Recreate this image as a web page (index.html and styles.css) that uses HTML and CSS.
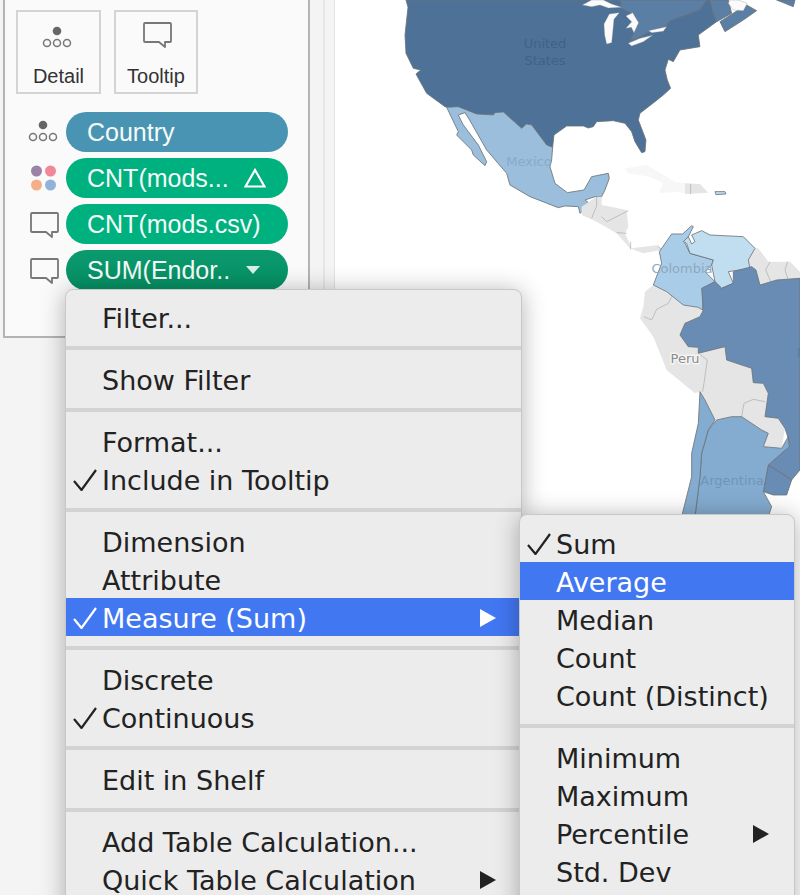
FILE: index.html
```html
<!DOCTYPE html>
<html lang="en">
<head>
    <meta charset="UTF-8">
    <title>Marks card menu</title>
    <link rel="stylesheet" href="styles.css">
</head>
<body>
    <div class="page">
        <aside class="sidebar">
            <div class="marks">
                <div class="cards">
                    <div class="card">
                        <svg class="card-icon card-dots" width="34" height="34" viewBox="0 0 34 34"><use href="#detail-icon"/></svg>
                        <span>Detail</span>
                    </div>
                    <div class="card">
                        <svg class="card-icon" width="34" height="34" viewBox="0 5 34 34"><use href="#tip-icon"/></svg>
                        <span>Tooltip</span>
                    </div>
                </div>
                <div class="pills">
                    <div class="pill-row">
                        <svg width="34" height="34" viewBox="0 -1 34 34"><use href="#detail-icon"/></svg>
                        <div class="pill pill-blue">Country</div>
                    </div>
                    <div class="pill-row">
                        <svg width="34" height="34" viewBox="0 0 34 34">
                            <circle cx="10.500" cy="10" r="5.500" fill="#9a82a8"/>
                            <circle cx="24.500" cy="10" r="5.500" fill="#f2879a"/>
                            <circle cx="10.500" cy="24" r="5.500" fill="#f3b088"/>
                            <circle cx="24.500" cy="24" r="5.500" fill="#92b3d8"/>
                        </svg>
                        <div class="pill pill-green">CNT(mods...
                            <svg class="pill-mark" width="22" height="20" viewBox="0 0 22 20"><path d="M11 2 L20.500 18.500 H1.500 Z" fill="none" stroke="#fff" stroke-width="2.200"/></svg>
                        </div>
                    </div>
                    <div class="pill-row">
                        <svg width="34" height="34" viewBox="0 0 34 34"><use href="#tip-icon"/></svg>
                        <div class="pill pill-green">CNT(mods.csv)</div>
                    </div>
                    <div class="pill-row">
                        <svg width="34" height="34" viewBox="0 0 34 34"><use href="#tip-icon"/></svg>
                        <div class="pill pill-dark">SUM(Endor..
                            <svg class="pill-caret" width="14" height="8" viewBox="0 0 14 8"><path d="M0 0 H14 L7 8 Z" fill="#d8efe6"/></svg>
                        </div>
                    </div>
                </div>
            </div>
            <div class="gutter"></div>
        </aside>

        <main class="map">
            <svg width="465" height="895" viewBox="335 0 465 895">
                <defs>
                    <g id="detail-icon" fill="none" stroke="#777" stroke-width="1.500">
                        <circle cx="17" cy="9" r="4.300" fill="#666" stroke="none"/>
                        <circle cx="7" cy="21" r="3.500"/>
                        <circle cx="17" cy="21" r="3.500"/>
                        <circle cx="27" cy="21" r="3.500"/>
                    </g>
                    <path id="tip-icon" d="M6 6 H31 Q32 6 32 7 V24 Q32 25 31 25 H26 V30 L20 25 H6 Q5 25 5 24 V7 Q5 6 6 6 Z" fill="none" stroke="#777" stroke-width="1.800" stroke-linejoin="round"/>
                </defs>

                <!-- north america, points read off a 3x crop -->
                <g transform="translate(330 0) scale(0.3333)">
                    <path class="land usa" d="M228 0 L234 22 L225 105 L228 160 L250 205 L272 210 L258 222 L265 235 L290 280 L345 320 L440 342 L490 345 L495 338 L520 336 L575 385 L590 372 L605 375 L650 435 L668 442 L672 405 L710 378 L760 378 L775 384 L790 380 L800 365 L850 362 L885 370 L905 395 L915 425 L935 458 L945 455 L948 420 L925 360 L930 340 L975 305 L1000 285 L1022 265 L1012 240 L1005 210 L1015 178 L1030 185 L1050 150 L1110 140 L1105 105 L1160 65 L1150 35 L1140 0 Z"/>
                    <path class="land canada" d="M870 0 L1130 0 L1110 30 L1020 62 L1005 82 L960 95 L900 125 L925 70 L905 40 L875 25 Z"/>
                    <path class="land canada" d="M1140 0 L1195 0 L1205 40 L1160 65 L1150 40 Z"/>
                    <path class="land canada" d="M1170 65 L1225 30 L1250 15 L1280 32 L1240 60 L1185 95 Z"/>
                    <path class="land canada" d="M1340 0 L1395 0 L1390 20 L1365 10 Z"/>
                    <path class="lake" d="M757 15 L785 0 L820 0 L845 12 L875 22 L835 24 L810 15 L785 20 Z"/>
                    <path class="lake" d="M822 72 L838 42 L868 38 L852 58 L848 100 L845 128 L830 132 L824 105 Z"/>
                    <path class="lake" d="M888 48 L908 38 L926 68 L912 98 L904 82 L888 85 L905 65 Z"/>
                    <path class="lake" d="M895 130 L930 115 L968 106 L940 125 L905 138 Z"/>
                    <path class="lake" d="M956 92 L1010 80 L1000 94 L965 98 Z"/>
                    <path class="lake" d="M1195 10 L1210 30 L1240 32 L1252 10 L1225 0 L1200 0 Z"/>
                    <path class="land mexico" d="M350 322 L385 320 L440 342 L490 345 L495 338 L520 336 L575 385 L590 372 L605 375 L650 435 L668 442 L665 480 L660 500 L675 550 L712 578 L762 570 L785 530 L835 520 L838 535 L825 570 L815 590 L795 590 L765 600 L780 612 L750 640 L745 620 L705 618 L685 623 L600 590 L540 555 L530 520 L470 450 L420 362 L405 338 L385 345 L400 375 L445 435 L470 485 L465 497 L430 465 L425 450 L380 405 L385 395 Z"/>
                    <path class="ghost" d="M885 505 L950 495 L1035 545 L1065 550 L1065 580 L1040 575 L985 580 L1000 550 L960 530 L895 520 Z"/>
                    <path class="other" d="M1065 550 L1110 552 L1135 578 L1065 582 Z"/>
                    <path class="other-line" d="M1082 552 V582"/>
                    <path class="land venezuela" d="M1155 575 L1185 575 L1188 582 L1158 584 Z"/>
                    <path class="other" d="M755 620 L800 590 L815 590 L815 615 L890 630 L895 680 L885 700 L905 745 L985 735 L995 750 L940 760 L900 745 L860 700 L800 665 L755 645 Z"/>
                    <path class="other-line" d="M800 590 V618 L785 655 M815 650 L830 665 L895 632 M860 698 L890 700 M902 725 V748 M985 740 L995 750"/>
                </g>

                <!-- south america -->
                <g transform="translate(520 220) scale(0.3333)">
                    <path class="other" d="M705 85 L685 120 L690 145 L708 150 L720 195 L770 180 L840 175 L840 155 L810 125 L745 125 L715 85 Z"/>
                    <path class="other-line" d="M750 125 L737 150 L752 185 M803 125 L795 150 L805 180"/>
                    <path class="other" d="M400 195 L375 215 L370 260 L360 295 L400 350 L440 450 L525 520 L540 515 L555 540 L585 600 L635 590 L665 590 L725 630 L745 640 L730 680 L785 685 L795 625 L775 595 L735 590 L745 520 L730 490 L700 488 L695 445 L620 420 L615 380 L535 400 L535 382 L505 380 L480 345 L495 310 L540 290 L548 270 L535 262 L490 255 L440 215 Z"/>
                    <path class="other-line" d="M372 290 L395 300 L410 268 L445 250 L458 225 M535 400 L562 420 L552 490 L548 515 M665 590 L672 550 L700 538 L735 545"/>
                    <path class="land colombia" d="M515 17 L488 42 L455 42 L432 75 L418 95 L425 130 L400 195 L440 215 L490 255 L535 262 L548 270 L550 205 L585 185 L555 155 L575 135 L580 120 L510 100 L495 70 L520 20 Z"/>
                    <path class="land venezuela" d="M500 70 L510 100 L580 120 L575 135 L585 185 L605 205 L640 190 L625 155 L690 145 L685 120 L705 85 L690 70 L670 50 L570 45 L545 32 L515 45 L525 65 L515 72 L505 50 L490 65 Z"/>
                    <path class="land brazil" d="M840 175 L770 180 L720 195 L708 150 L695 140 L640 155 L640 190 L605 205 L585 185 L545 205 L550 270 L540 290 L495 310 L480 345 L505 380 L535 382 L535 400 L615 380 L620 420 L695 445 L700 488 L730 490 L745 520 L735 590 L775 595 L795 625 L805 655 L805 680 L745 735 L815 780 L840 750 Z"/>
                    <path class="land brazil" d="M745 735 L815 780 L800 825 L760 825 L730 815 Z"/>
                    <path class="land argentina" d="M590 600 L635 590 L665 590 L725 630 L745 640 L730 680 L785 685 L805 650 L808 680 L745 735 L730 815 L755 860 L745 890 L525 890 L540 770 L545 700 L565 630 Z"/>
                    <path class="land argentina" d="M540 515 L555 540 L585 600 L565 630 L545 700 L540 770 L525 890 L485 890 L515 770 L515 700 L535 610 Z"/>
                </g>

                <text class="label label-usa" x="545" y="48">United</text>
                <text class="label label-usa" x="545" y="65">States</text>
                <text class="label label-mex" x="529" y="166">Mexico</text>
                <text class="label label-col" x="682" y="273">Colombia</text>
                <text class="label label-peru" x="685" y="363">Peru</text>
                <text class="label label-arg" x="732" y="485">Argentina</text>
                <text class="label label-bra" x="797" y="357">Brazil</text>
            </svg>
        </main>

        <div class="menu main-menu">
            <div class="menu-item"><span class="check"></span>Filter...</div>
            <div class="menu-sep"></div>
            <div class="menu-item"><span class="check"></span>Show Filter</div>
            <div class="menu-sep"></div>
            <div class="menu-item"><span class="check"></span>Format...</div>
            <div class="menu-item"><span class="check"><svg width="24" height="22" viewBox="0 0 24 22"><path d="M1 12 L8.500 21 L23 1" fill="none" stroke="currentColor" stroke-width="2.200"/></svg></span>Include in Tooltip</div>
            <div class="menu-sep"></div>
            <div class="menu-item"><span class="check"></span>Dimension</div>
            <div class="menu-item"><span class="check"></span>Attribute</div>
            <div class="menu-item active"><span class="check"><svg width="24" height="22" viewBox="0 0 24 22"><path d="M1 12 L8.500 21 L23 1" fill="none" stroke="currentColor" stroke-width="2.200"/></svg></span>Measure (Sum)<span class="arrow"></span></div>
            <div class="menu-sep"></div>
            <div class="menu-item"><span class="check"></span>Discrete</div>
            <div class="menu-item"><span class="check"><svg width="24" height="22" viewBox="0 0 24 22"><path d="M1 12 L8.500 21 L23 1" fill="none" stroke="currentColor" stroke-width="2.200"/></svg></span>Continuous</div>
            <div class="menu-sep"></div>
            <div class="menu-item"><span class="check"></span>Edit in Shelf</div>
            <div class="menu-sep"></div>
            <div class="menu-item"><span class="check"></span>Add Table Calculation...</div>
            <div class="menu-item"><span class="check"></span>Quick Table Calculation<span class="arrow"></span></div>
        </div>

        <div class="menu sub-menu">
            <div class="menu-item"><span class="check"><svg width="24" height="22" viewBox="0 0 24 22"><path d="M1 12 L8.500 21 L23 1" fill="none" stroke="currentColor" stroke-width="2.200"/></svg></span>Sum</div>
            <div class="menu-item active"><span class="check"></span>Average</div>
            <div class="menu-item"><span class="check"></span>Median</div>
            <div class="menu-item"><span class="check"></span>Count</div>
            <div class="menu-item"><span class="check"></span>Count (Distinct)</div>
            <div class="menu-sep"></div>
            <div class="menu-item"><span class="check"></span>Minimum</div>
            <div class="menu-item"><span class="check"></span>Maximum</div>
            <div class="menu-item"><span class="check"></span>Percentile<span class="arrow"></span></div>
            <div class="menu-item"><span class="check"></span>Std. Dev</div>
        </div>
    </div>
</body>
</html>
```

FILE: styles.css
```css
* {
    box-sizing: border-box;
}

body {
    margin: 0;
    background: #fff;
    font-family: 'Liberation Sans', Arial, sans-serif;
}

.page {
    position: relative;
    display: flex;
    width: 800px;
    height: 895px;
    overflow: hidden;
}

/* left side */
.sidebar {
    display: flex;
    flex: none;
    align-items: flex-start;
    width: 335px;
    height: 100%;
    padding-left: 3px;
    background: #f4f4f4;
    border-right: 1px solid #e4e4e4;
}

.marks {
    flex: none;
    width: 307px;
    height: 338px;
    padding: 10px 0 0 11px;
    background: #fafafa;
    border: solid #b4b4b4;
    border-width: 0 2px 2px 2px;
}

.gutter {
    flex: none;
    width: 15px;
    height: 100%;
    border-right: 2px solid #e6e6e6;
}

.cards {
    display: flex;
    gap: 13px;
}

.card {
    display: flex;
    flex-direction: column;
    align-items: center;
    width: 85px;
    height: 84px;
    padding-top: 10px;
    border: 2px solid #d4d4d4;
    font-size: 20px;
    color: #333;
}

.card + .card {
    width: 84px;
}

.card-icon {
    margin-bottom: 9px;
}

.card-dots {
    margin-right: 3px;
}

.pills {
    display: flex;
    flex-direction: column;
    gap: 6px;
    margin-top: 18px;
}

.pill-row {
    display: flex;
    align-items: center;
    gap: 6px;
    margin-left: 10px;
}

.pill {
    position: relative;
    display: flex;
    align-items: center;
    justify-content: space-between;
    width: 222px;
    height: 40px;
    padding: 0 22px 0 21px;
    border-radius: 20px;
    color: #f4fbf8;
    font-size: 25px;
}

.pill-blue {
    background: #4a94b3;
}

.pill-green {
    background: #00b180;
}

.pill-dark {
    background: linear-gradient(#0a9a6e, #068f63);
}

.pill-caret {
    margin-right: 6px;
}

/* map */
.map {
    flex: 1;
    height: 100%;
}

.map svg {
    display: block;
}

.land {
    stroke: #6c7278;
    stroke-width: 2.500;
    stroke-linejoin: round;
}

.usa {
    fill: #4e7198;
}

.canada {
    fill: #5a7ea4;
}

.mexico {
    fill: #9abedb;
}

.colombia {
    fill: #a9cde8;
}

.venezuela {
    fill: #c0deef;
}

.brazil {
    fill: #688cb4;
}

.argentina {
    fill: #84acd0;
}

.lake {
    fill: #fbfbfb;
    stroke: #8a8f94;
    stroke-width: 1;
}

.other {
    fill: #e5e5e5;
}

.ghost {
    fill: #f7f7f7;
}

.other-line {
    fill: none;
    stroke: #aaa;
    stroke-width: 2;
}

.label {
    font-family: 'DejaVu Sans', sans-serif;
    font-size: 13px;
    text-anchor: middle;
}

.label-usa {
    fill: #40618a;
}

.label-mex {
    fill: #86abcc;
}

.label-col {
    fill: #8fa8bc;
}

.label-peru {
    fill: #8c8c8c;
    paint-order: stroke;
    stroke: #f4f4f4;
    stroke-width: 3px;
}

.label-arg {
    fill: #6e96ba;
}

.label-bra {
    fill: #587ca3;
    text-anchor: start;
}

/* context menus */
.menu {
    position: absolute;
    background: #ececec;
    border: 1px solid #c8c8c8;
    border-radius: 8px 8px 0 0;
    box-shadow: 0 2px 24px rgba(0, 0, 0, 0.3);
    font-family: 'DejaVu Sans', sans-serif;
    font-size: 27px;
    color: #222;
}

.main-menu {
    left: 65px;
    top: 289px;
    width: 457px;
    height: 640px;
    padding-top: 8px;
}

.sub-menu {
    left: 519px;
    top: 514px;
    width: 276px;
    height: 420px;
    padding-top: 9px;
}

.menu-item {
    display: flex;
    align-items: center;
    height: 38px;
    padding-top: 2px;
    white-space: nowrap;
}

.menu-item.active {
    background: #4277f2;
    color: #fff;
}

.check {
    display: flex;
    flex: none;
    width: 36px;
    padding-left: 7px;
}

.menu-sep {
    height: 4px;
    margin: 10px 0;
    background: #d3d3d3;
}

.arrow {
    width: 0;
    height: 0;
    margin-left: auto;
    margin-right: 25px;
    border-left: 16px solid currentColor;
    border-top: 9px solid transparent;
    border-bottom: 9px solid transparent;
}
```
